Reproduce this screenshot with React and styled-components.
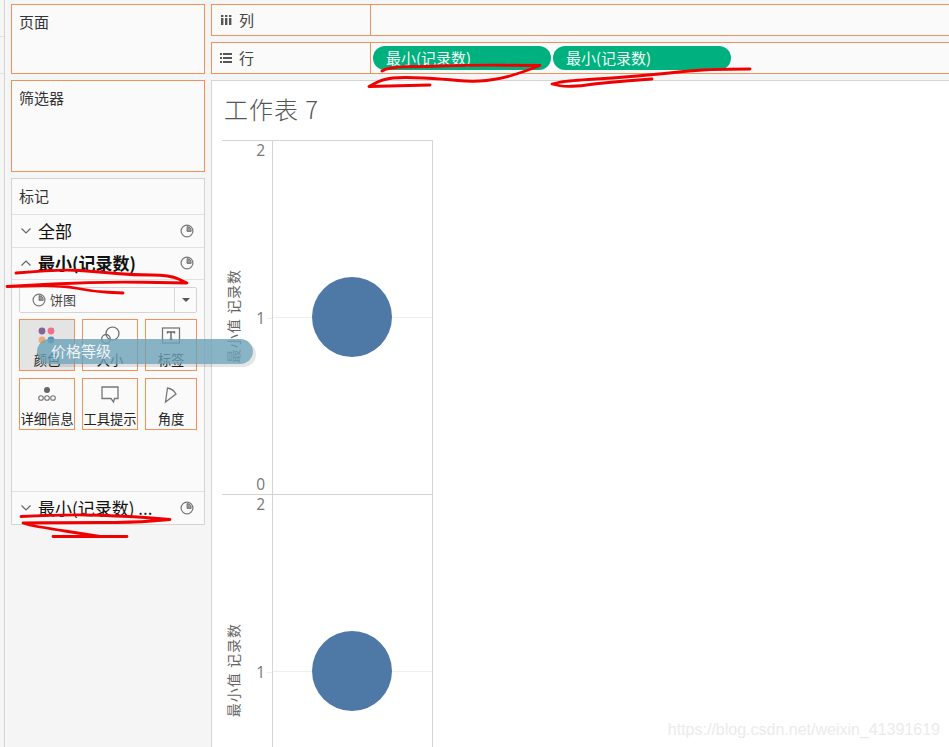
import React from "react";
import styled, { createGlobalStyle } from "styled-components";

const GlobalStyle = createGlobalStyle`
  * {
    box-sizing: border-box;
  }
  html, body {
    margin: 0;
    padding: 0;
    background: #f5f5f5;
  }
  body {
    font-family: "Noto Sans CJK SC", "Liberation Sans", sans-serif;
    color: #333;
  }
`;

const ORANGE = "#ef9158";
const GREY_LINE = "#d4d4d4";

const Page = styled.div`
  position: relative;
  display: flex;
  width: 949px;
  height: 747px;
  overflow: hidden;
  background: #f5f5f5;
`;

const Stub = styled.div`
  width: 5px;
  flex: none;
  padding-top: 36px;
  border-right: 1px solid ${GREY_LINE};
`;

const StubRow = styled.div`
  height: 37px;
  border-top: 1px solid #e2e2e2;
`;

const Sidebar = styled.aside`
  width: 200px;
  flex: none;
  padding: 4px 0 0 6px;
  display: flex;
  flex-direction: column;
  gap: 6px;
`;

const Card = styled.section`
  height: ${(p) => p.$height}px;
  padding: 6px 7px;
  background: #fafafa;
  border: 1px solid ${ORANGE};
  font-size: 15px;
  line-height: 22px;
`;

const Marks = styled.section`
  height: 347px;
  background: #fafafa;
  border: 1px solid ${GREY_LINE};
  display: flex;
  flex-direction: column;
`;

const MarksTitle = styled.div`
  height: 36px;
  padding: 6px 7px;
  font-size: 15px;
  line-height: 22px;
  border-bottom: 1px solid #e2e2e2;
`;

const MarkRow = styled.div`
  height: ${(p) => p.$height}px;
  flex: none;
  display: flex;
  align-items: center;
  padding: 0 10px 1px 8px;
  font-size: 17px;
  font-weight: ${(p) => (p.$bold ? 700 : 400)};
  color: #111;
  border-bottom: ${(p) => (p.$last ? "none" : "1px solid #e2e2e2")};
  white-space: nowrap;

  span {
    margin-left: 6px;
    margin-bottom: 1px;
    flex: 1;
  }
`;

const MarkBody = styled.div`
  flex: 1;
  padding: 7px 7px 0;
  border-bottom: 1px solid #e2e2e2;
`;

const Select = styled.div`
  height: 26px;
  display: flex;
  align-items: center;
  background: #fbfbfb;
  border: 1px solid ${GREY_LINE};
  border-radius: 2px;
  font-size: 13px;
  color: #444;
  padding-left: 12px;
  gap: 4px;
`;

const SelectText = styled.span`
  flex: 1;
  margin-bottom: 2px;
`;

const Caret = styled.div`
  width: 22px;
  height: 100%;
  display: flex;
  align-items: center;
  justify-content: center;
  border-left: 1px solid ${GREY_LINE};

  &::after {
    content: "";
    border-left: 4px solid transparent;
    border-right: 4px solid transparent;
    border-top: 4px solid #555;
  }
`;

const MarkGrid = styled.div`
  margin-top: 6px;
  display: grid;
  grid-template-columns: 56px 56px 52px;
  grid-auto-rows: 52px;
  gap: 7px;
`;

const MarkButton = styled.div`
  border: 1px solid ${ORANGE};
  background: ${(p) => (p.$active ? "#e4e4e4" : "#fafafa")};
  display: flex;
  flex-direction: column;
  align-items: center;
  padding-bottom: 1px;
  font-size: 13.3px;
  line-height: 18px;
  color: #222;
  white-space: nowrap;
`;

const ButtonIcon = styled.svg`
  display: block;
  flex: none;
  margin-top: ${(p) => p.$top}px;
  margin-bottom: auto;
`;

const Main = styled.main`
  flex: 1;
  min-width: 0;
  margin-left: 6px;
  padding-top: 4px;
  display: flex;
  flex-direction: column;
  gap: 6px;
`;

const Shelf = styled.div`
  height: 32px;
  flex: none;
  display: flex;
  background: #fafafa;
  border: 1px solid ${ORANGE};
  border-right: none;
`;

const ShelfLabel = styled.div`
  width: 159px;
  flex: none;
  display: flex;
  align-items: center;
  gap: 7px;
  padding: 0 0 2px 8px;
  font-size: 15px;
  color: #444;
  border-right: 1px solid ${ORANGE};

  svg {
    margin-top: 2px;
  }
`;

const ShelfBody = styled.div`
  flex: 1;
  display: flex;
  align-items: center;
  gap: 2px;
  padding: 0 0 1px 2px;
`;

const Pill = styled.div`
  width: 178px;
  height: 24px;
  padding-left: 13px;
  border-radius: 12px;
  background: #00b180;
  color: #f2fbf7;
  font-size: 15px;
  line-height: 24px;
`;

const Sheet = styled.div`
  flex: 1;
  min-height: 0;
  overflow: hidden;
  background: #fff;
  border: 1px solid ${GREY_LINE};
  border-right: none;
  border-bottom: none;
  padding-left: 10px;
`;

const SheetTitle = styled.h1`
  margin: 0;
  height: 59px;
  padding: 12px 0 0 2px;
  font-size: 24px;
  line-height: 32px;
  font-weight: 300;
  letter-spacing: 1px;
  color: #555;
`;

const Pane = styled.div`
  width: 211px;
  height: 354px;
  flex: none;
  display: flex;
  border-top: 1px solid ${GREY_LINE};
  border-right: 1px solid ${GREY_LINE};
`;

const Axis = styled.div`
  width: 51px;
  flex: none;
  display: flex;
  border-right: 1px solid ${GREY_LINE};
`;

const AxisTitle = styled.div`
  width: 22px;
  flex: none;
  display: flex;
  align-items: center;
  justify-content: center;
  padding: 0 1px 3px 0;
  font-size: 14px;
  letter-spacing: 1px;
  color: #666;
  white-space: nowrap;

  span {
    writing-mode: vertical-rl;
    text-orientation: sideways;
    transform: rotate(180deg);
  }
`;

const Ticks = styled.div`
  flex: 1;
  display: flex;
  flex-direction: column;
  justify-content: space-between;
  padding-top: 1px;
`;

const Tick = styled.div`
  height: 20px;
  display: flex;
  align-items: ${(p) => (p.$top ? "flex-start" : "center")};
  justify-content: flex-end;
  gap: 2px;
  font-family: "Open Sans", "Liberation Sans", sans-serif;
  font-size: 15.5px;
  line-height: 16px;
  color: #777;

  &::after {
    content: "";
    width: 5px;
    height: 1px;
    background: ${(p) => (p.$mark ? "#eeeeee" : "transparent")};
  }
`;

const Plot = styled.div`
  flex: 1;
  display: flex;
  align-items: center;
  justify-content: center;
  padding: 0 1px 1px 0;
  background: linear-gradient(#eeeeee, #eeeeee) 0 176px / 100% 1px no-repeat;
`;

const Bubble = styled.div`
  width: 80px;
  height: 80px;
  border-radius: 50%;
  background: #4e79a7;
`;

const DragPill = styled.div`
  position: absolute;
  left: 37px;
  top: 339px;
  width: 216px;
  height: 25px;
  padding-left: 14px;
  border-radius: 13px;
  background: rgba(107, 161, 183, 0.8);
  box-shadow: 3px 3px 0 rgba(0, 0, 0, 0.1);
  color: rgba(255, 255, 255, 0.88);
  font-size: 15px;
  line-height: 23px;
`;

const Scribbles = styled.svg`
  position: absolute;
  left: 0;
  top: 0;
  pointer-events: none;
`;

const Watermark = styled.div`
  position: absolute;
  right: 9px;
  bottom: 8px;
  font-family: "Liberation Sans", sans-serif;
  font-size: 16px;
  color: #ebebeb;
`;

const PieIcon = () => (
  <svg width="14" height="14" viewBox="0 0 14 14" fill="none" style={{ flex: "none" }}>
    <circle cx="7" cy="7" r="5.9" stroke="#777" strokeWidth="1.2" />
    <path d="M7 7.4V2.6A4.6 4.6 0 0 1 11.2 7.4Z" fill="#999" stroke="#666" strokeWidth="0.8" />
  </svg>
);

const Chevron = ({ up }) => (
  <svg width="12" height="8" viewBox="0 0 12 8" fill="none" stroke="#666" strokeWidth="1.2" style={{ flex: "none" }}>
    <path d={up ? "M1.5 6.5L6 2l4.5 4.5" : "M1.5 1.5L6 6l4.5-4.5"} />
  </svg>
);

const ColorIcon = () => (
  <ButtonIcon $top={3} width="22" height="22" viewBox="0 0 22 22">
    <circle cx="6" cy="8" r="3.4" fill="#80649a" />
    <circle cx="15" cy="8" r="3.4" fill="#f0708a" />
    <circle cx="6" cy="17" r="3.4" fill="#f0a878" />
    <circle cx="15" cy="17" r="3.4" fill="#5a8fb8" />
  </ButtonIcon>
);

const SizeIcon = () => (
  <ButtonIcon $top={3} width="22" height="22" viewBox="0 0 22 22" fill="none" stroke="#666" strokeWidth="1.2">
    <circle cx="13.5" cy="10.5" r="6.5" />
    <circle cx="7" cy="16" r="4.3" />
  </ButtonIcon>
);

const LabelIcon = () => (
  <ButtonIcon $top={7} width="20" height="18" viewBox="0 0 20 18" fill="none">
    <rect x="1.5" y="1" width="17" height="15" stroke="#777" strokeWidth="1.3" />
    <path d="M6.5 6.6V5h7v1.6M10 5v7.5M8.5 12.5h3" stroke="#666" strokeWidth="1.4" />
  </ButtonIcon>
);

const DetailIcon = () => (
  <ButtonIcon $top={6} width="20" height="18" viewBox="0 0 20 18" fill="none" stroke="#777" strokeWidth="1.1">
    <circle cx="10" cy="5" r="3" fill="#666" stroke="none" />
    <circle cx="4" cy="13" r="2.3" />
    <circle cx="10" cy="13" r="2.3" />
    <circle cx="16" cy="13" r="2.3" />
  </ButtonIcon>
);

const TooltipIcon = () => (
  <ButtonIcon $top={7} width="18" height="18" viewBox="0 0 18 18" fill="none" stroke="#777" strokeWidth="1.3">
    <path d="M1 1h16v11.5h-3.5L12.5 16l-2.5-3.5H1Z" />
  </ButtonIcon>
);

const AngleIcon = () => (
  <ButtonIcon $top={8} width="14" height="17" viewBox="0 0 14 17" fill="none" stroke="#777" strokeWidth="1.3">
    <path d="M1.5 15L3.5 1c4 .6 6.5 2.5 8.5 6Z" />
  </ButtonIcon>
);

const ColumnsIcon = () => (
  <svg width="11" height="10" viewBox="0 0 11 10" fill="#555" style={{ flex: "none", marginLeft: 1 }}>
    <rect x="0" y="3" width="2.4" height="7" />
    <rect x="4" y="3" width="2.4" height="7" />
    <rect x="8" y="3" width="2.4" height="7" />
    <rect x="0" y="0" width="2.4" height="2" />
    <rect x="4" y="0" width="2.4" height="2" />
    <rect x="8" y="0" width="2.4" height="2" />
  </svg>
);

const RowsIcon = () => (
  <svg width="12" height="10" viewBox="0 0 12 10" fill="#555" style={{ flex: "none" }}>
    <rect x="0" y="0" width="2" height="2" />
    <rect x="0" y="4" width="2" height="2" />
    <rect x="0" y="8" width="2" height="2" />
    <rect x="3" y="0" width="9" height="2" />
    <rect x="3" y="4" width="9" height="2" />
    <rect x="3" y="8" width="9" height="2" />
  </svg>
);

// hand drawn red marks, points are page coordinates. a point given twice makes a sharp tip
const smooth = (pts) => {
  let d = `M${pts[0][0]} ${pts[0][1]}`;
  for (let i = 1; i < pts.length - 1; i++) {
    const mx = (pts[i][0] + pts[i + 1][0]) / 2;
    const my = (pts[i][1] + pts[i + 1][1]) / 2;
    d += `Q${pts[i][0]} ${pts[i][1]} ${mx} ${my}`;
  }
  const last = pts[pts.length - 1];
  return d + `L${last[0]} ${last[1]}`;
};

const marks = [
  [[382, 71], [388, 67], [427, 66.5], [470, 65], [540, 65.5], [540, 65.5], [523, 72], [500, 79], [473, 82], [443, 79], [403, 77], [383, 79], [369, 86.5], [369, 86.5], [430, 85]],
  [[750, 69], [705, 69], [662, 74], [612, 78], [565, 81], [552, 84], [552, 84], [568, 87.5], [605, 82.5], [652, 79]],
  [[16, 273], [60, 269], [100, 272], [133, 275], [170, 275], [187, 283], [187, 283], [100, 281.5], [7, 286.5], [7, 286.5], [60, 285], [93, 291.5], [123, 293]],
  [[21, 516.5], [67, 514], [133, 516.5], [170, 519.5], [170, 519.5], [133, 522.5], [67, 522.5], [23, 523], [23, 523], [33, 526], [100, 536.5], [100, 536.5], [53, 536.5], [53, 536.5], [127, 536.5]],
];

const MinPane = () => (
  <Pane>
    <Axis>
      <AxisTitle>
        <span>最小值 记录数</span>
      </AxisTitle>
      <Ticks>
        <Tick $top>2</Tick>
        <Tick $mark>1</Tick>
        <Tick>0</Tick>
      </Ticks>
    </Axis>
    <Plot>
      <Bubble />
    </Plot>
  </Pane>
);

export default function App() {
  return (
    <Page>
      <GlobalStyle />
      <Stub>
        <StubRow />
        <StubRow />
      </Stub>

      <Sidebar>
        <Card $height={70}>页面</Card>
        <Card $height={92}>筛选器</Card>
        <Marks>
          <MarksTitle>标记</MarksTitle>
          <MarkRow $height={33}>
            <Chevron />
            <span>全部</span>
            <PieIcon />
          </MarkRow>
          <MarkRow $height={32} $bold>
            <Chevron up />
            <span>最小(记录数)</span>
            <PieIcon />
          </MarkRow>
          <MarkBody>
            <Select>
              <PieIcon />
              <SelectText>饼图</SelectText>
              <Caret />
            </Select>
            <MarkGrid>
              <MarkButton $active>
                <ColorIcon />
                颜色
              </MarkButton>
              <MarkButton>
                <SizeIcon />
                大小
              </MarkButton>
              <MarkButton>
                <LabelIcon />
                标签
              </MarkButton>
              <MarkButton>
                <DetailIcon />
                详细信息
              </MarkButton>
              <MarkButton>
                <TooltipIcon />
                工具提示
              </MarkButton>
              <MarkButton>
                <AngleIcon />
                角度
              </MarkButton>
            </MarkGrid>
          </MarkBody>
          <MarkRow $height={32} $last>
            <Chevron />
            <span>最小(记录数) ...</span>
            <PieIcon />
          </MarkRow>
        </Marks>
      </Sidebar>

      <Main>
        <Shelf>
          <ShelfLabel>
            <ColumnsIcon />列
          </ShelfLabel>
          <ShelfBody />
        </Shelf>
        <Shelf>
          <ShelfLabel>
            <RowsIcon />行
          </ShelfLabel>
          <ShelfBody>
            <Pill>最小(记录数)</Pill>
            <Pill>最小(记录数)</Pill>
          </ShelfBody>
        </Shelf>
        <Sheet>
          <SheetTitle>工作表 7</SheetTitle>
          <MinPane />
          <MinPane />
        </Sheet>
      </Main>

      <DragPill>价格等级</DragPill>
      <Scribbles width="949" height="747" viewBox="0 0 949 747" fill="none" stroke="#f00000" strokeWidth="2.8" strokeLinecap="round" strokeLinejoin="round">
        {marks.map((m, i) => (
          <path key={i} d={smooth(m)} />
        ))}
      </Scribbles>
      <Watermark>https://blog.csdn.net/weixin_41391619</Watermark>
    </Page>
  );
}
